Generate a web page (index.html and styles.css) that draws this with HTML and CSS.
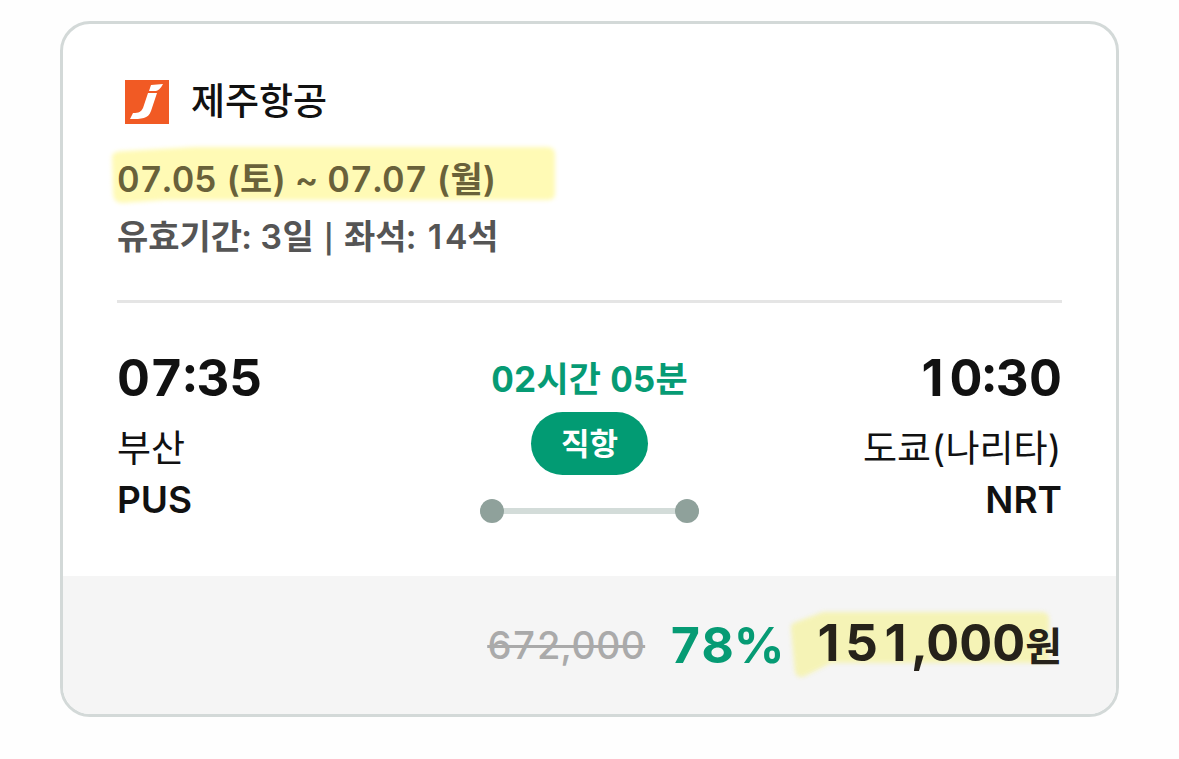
FILE: index.html
```html
<!DOCTYPE html>
<html lang="ko">
<head>
  <meta charset="UTF-8">
  <meta name="viewport" content="width=device-width, initial-scale=1.0">
  <title>제주항공 부산 - 도쿄</title>
  <link rel="stylesheet" href="styles.css">
</head>
<body>
  <article class="ticket">
    <div class="ticket-body">
      <header class="airline">
        <svg class="airline-logo" viewBox="0 0 44 44" aria-hidden="true">
          <rect width="44" height="44" fill="#f15a24"/>
          <path d="M26 5 L38 4 Q35 10 31 11 L24 11 Z" fill="#fff"/>
          <path d="M23 13 H32 L26 31 C23 39 17 39 5 39 L8 33 C14 33 16 32 18 28 Z" fill="#fff"/>
        </svg>
        <h1 class="airline-name">제주항공</h1>
      </header>
      <div class="info">
        <p class="dates">
          <svg class="marker" viewBox="0 0 456 66" aria-hidden="true">
            <path d="M7 15 Q8 10 20 10 L90 6 H442 Q450 6 450 14 V53 Q450 59 442 59 H60 L18 62 Q8 62 8 52 Z"/>
          </svg>
          <span class="marked">07.05 (토) ~ 07.07 (월)</span>
        </p>
        <p>유효기간: 3일 <span class="bar">|</span> 좌석: <span class="one">1</span>4석</p>
      </div>

      <section class="route">
        <div class="stop">
          <p class="time">07:35</p>
          <p class="city">부산</p>
          <p class="code">PUS</p>
        </div>
        <div class="flight">
          <p class="duration">02시간 05분</p>
          <span class="badge">직항</span>
          <div class="track"></div>
        </div>
        <div class="stop stop-end">
          <p class="time"><span class="one">1</span>0:30</p>
          <p class="city">도쿄(나리타)</p>
          <p class="code">NRT</p>
        </div>
      </section>
    </div>

    <footer class="fare">
      <s class="fare-old">672,000</s>
      <span class="fare-rate">78%</span>
      <strong class="fare-price">
        <svg class="marker" viewBox="0 0 280 80" aria-hidden="true">
          <path d="M6 26 Q5 21 11 19 L38 9 H256 Q264 9 264 16 V60 H46 L20 73 Q12 76 10 69 Z"/>
        </svg>
        <span class="marked"><span class="one">1</span>5<span class="one">1</span>,000<span class="won">원</span></span>
      </strong>
    </footer>
  </article>
</body>
</html>
```
FILE: styles.css
```css
* {
  box-sizing: border-box;
}

body {
  margin: 0;
  padding: 21px 60px;
  background-color: #fefefe;
  color: #111;
  font-family: Inter, "Noto Sans CJK KR", sans-serif;
  font-variant-numeric: tabular-nums;
}

h1,
p {
  margin: 0;
}

.ticket {
  border: 3px solid #d3d9d8;
  border-radius: 30px;
  background-color: #fff;
  overflow: hidden;
}

.ticket-body {
  padding: 48px 54px 52px;
}

.airline {
  display: flex;
  align-items: center;
  gap: 22px;
  height: 60px;
  padding-left: 8px;
}

.airline-logo {
  width: 44px;
  height: 44px;
}

.airline-name {
  font-size: 37px;
  font-weight: 500;
  line-height: 60px;
}

.info {
  padding: 19px 0 35px;
  border-bottom: 3px solid #e5e5e5;
  color: #555;
  font-size: 34px;
  font-weight: 600;
  line-height: 57px;
}

.bar {
  padding: 0 1px;
  font-size: 28px;
  line-height: 1;
}

/* plain 1 without the slab, padded to the tabular width */
.one {
  padding: 0 6px;
  font-variant-numeric: proportional-nums;
}

.info .one {
  padding: 0 3px;
}

/* highlighter stroke behind the text */
.dates,
.fare-price {
  position: relative;
}

.marker {
  position: absolute;
  fill: #fffab5;
  filter: blur(2px);
}

.marked {
  position: relative;
}

.dates {
  color: #69613a;
  font-size: 35px;
}

.dates .marker {
  left: -12px;
  top: -10px;
  width: 456px;
  height: 66px;
}

.route {
  display: grid;
  grid-template-columns: 1fr auto 1fr;
  padding-top: 44px;
}

.stop-end {
  text-align: right;
}

.time {
  font-size: 51px;
  font-weight: 700;
  line-height: 62px;
}

.city {
  margin-top: 13px;
  font-size: 37px;
  line-height: 54px;
}

.code {
  font-size: 37px;
  font-weight: 600;
  line-height: 48px;
}

.flight {
  display: flex;
  flex-direction: column;
  align-items: center;
}

.duration {
  color: #069b74;
  font-size: 35px;
  font-weight: 700;
  line-height: 65px;
}

.badge {
  padding: 0 30px;
  border-radius: 32px;
  background-color: #029b73;
  color: #fff;
  font-size: 31px;
  font-weight: 600;
  line-height: 63px;
}

.track {
  display: flex;
  align-items: center;
  justify-content: space-between;
  width: 219px;
  margin-top: 24px;
  background: linear-gradient(#d3dcd9, #d3dcd9) center / 100% 6px no-repeat;
}

.track::before,
.track::after {
  content: "";
  width: 24px;
  height: 24px;
  border-radius: 50%;
  background-color: #8fa19b;
}

.fare {
  display: flex;
  align-items: center;
  justify-content: flex-end;
  padding: 36px 54px;
  background-color: #f5f5f5;
  line-height: 62px;
}

.fare-old {
  color: #aaa;
  font-size: 38px;
  font-weight: 500;
  text-decoration-thickness: 3px;
}

.fare-rate {
  margin-left: 24px;
  color: #069b74;
  font-size: 50px;
  font-weight: 700;
}

.fare-price {
  margin-left: 27px;
  color: #26221a;
  font-size: 51px;
  font-weight: 700;
}

.fare-price .marker {
  left: -27px;
  top: -9px;
  width: 280px;
  height: 80px;
  fill: #f5f3b6;
}

.won {
  font-size: 40px;
}
```
